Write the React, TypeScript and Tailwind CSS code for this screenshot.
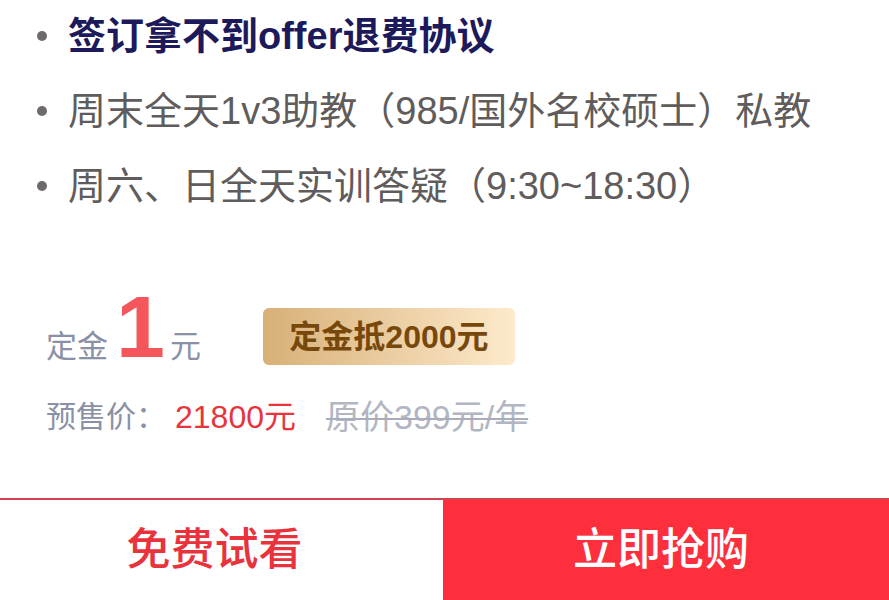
const font = { fontFamily: '"Liberation Sans", "Noto Sans CJK SC", sans-serif' };

const features = [
  { text: "签订拿不到offer退费协议", strong: true },
  { text: "周末全天1v3助教（985/国外名校硕士）私教", strong: false },
  { text: "周六、日全天实训答疑（9:30~18:30）", strong: false },
];

export default function App() {
  return (
    <div
      className="flex h-[600px] w-[889px] flex-col overflow-hidden bg-white [text-spacing-trim:space-all]"
      style={font}
    >
      <ul className="-mt-[2px] flex flex-col pl-[37px]">
        {features.map((f) => (
          <li key={f.text} className="flex h-[75px] items-center">
            <span className="h-[10px] w-[10px] rounded-full bg-[#6e6a6a]" />
            <span
              className={`ml-[21px] text-[38px] leading-none ${
                f.strong ? "font-bold text-[#1d1a5c]" : "text-[#605c5c]"
              }`}
            >
              {f.text}
            </span>
          </li>
        ))}
      </ul>

      <div className="mt-[67px] flex h-[76px] items-end pl-[46px]">
        <div className="flex items-baseline">
          <span className="mb-[4px] text-[31px] leading-none text-[#8a91a6]">定金</span>
          <span className="ml-[8px] text-[88px] font-bold leading-[64px] text-[#f4565c]">1</span>
          <span className="ml-[5px] text-[31px] leading-none text-[#8a91a6]">元</span>
        </div>
        <div className="mb-[1px] ml-[62px] flex h-[57px] w-[252px] items-center justify-center rounded-[6px] bg-gradient-to-r from-[#d8b077] to-[#fdeacb]">
          <span className="text-[32px] font-bold leading-none text-[#77480c]">定金抵2000元</span>
        </div>
      </div>

      <div className="mt-[34px] flex items-center pl-[46px] leading-none">
        <span className="text-[30px] text-[#8a91a6]">预售价：</span>
        <span className="ml-[9px] text-[32px] text-[#e8343d]">21800元</span>
        <span className="ml-[30px] text-[34px] text-[#b2b6c2] line-through decoration-[#a9adb9] decoration-2">
          原价399元/年
        </span>
      </div>

      <div className="mt-auto h-[2px] w-full bg-[#d2454f]" />
      <div className="flex h-[100px]">
        <button type="button" className="flex w-[443px] items-center justify-center bg-white pr-[14px]">
          <span className="text-[44px] font-medium leading-none text-[#e8333d]">免费试看</span>
        </button>
        <button type="button" className="flex flex-1 items-center justify-center bg-[#fe2f3c] pr-[10px]">
          <span className="text-[44px] font-medium leading-none text-white">立即抢购</span>
        </button>
      </div>
    </div>
  );
}
